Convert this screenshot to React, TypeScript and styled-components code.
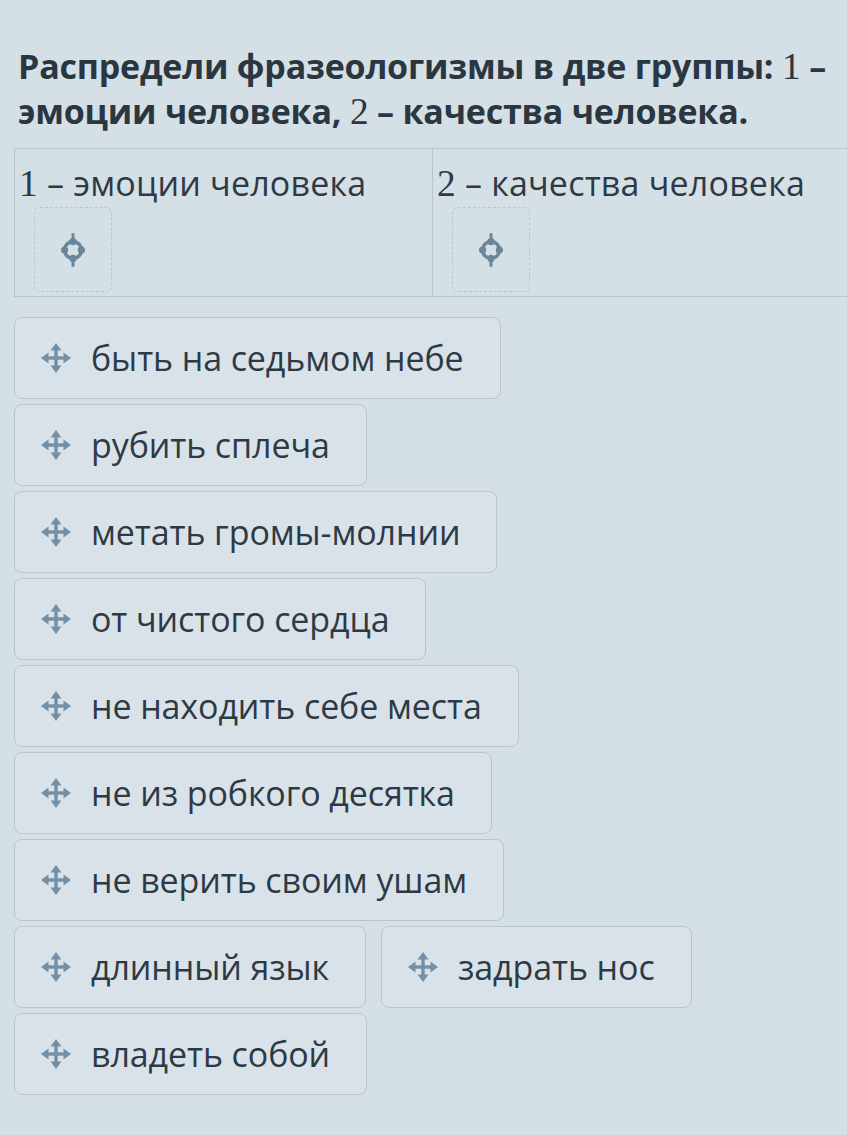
import React from "react";
import styled, { createGlobalStyle } from "styled-components";

const GlobalStyle = createGlobalStyle`
  html, body {
    margin: 0;
    padding: 0;
    background: #d5dfe6;
    overflow-x: hidden;
  }
  body {
    font-family: "Open Sans", "Noto Sans", sans-serif;
    color: #2d3a45;
  }
`;

const Page = styled.div`
  padding: 44px 0 30px 14px;
  min-height: 1135px;
  box-sizing: border-box;
`;

const Title = styled.h1`
  margin: 0 0 14px 4px;
  font-size: 34px;
  font-weight: 700;
  line-height: 45px;
  letter-spacing: -0.2px;
  color: #2a3640;
  white-space: nowrap;
`;

const Digit = styled.span`
  font-family: "Liberation Serif", serif;
  font-weight: 400;
  font-size: 1.1em;
`;

const Table = styled.div`
  display: grid;
  grid-template-columns: 418px 1fr;
  border: 1.5px solid #b8c3cb;
  border-right: none;
`;

const Cell = styled.div<{ $last?: boolean }>`
  padding: 13px 0 4px 4px;
  border-right: ${(p) => (p.$last ? "none" : "1.5px solid #b8c3cb")};
`;

const CellHead = styled.div`
  font-size: 34px;
  line-height: 42px;
  letter-spacing: 0.2px;
  color: #2d3a45;
  white-space: nowrap;
`;

const DropZone = styled.div`
  margin: 2px 0 0 15px;
  width: 78px;
  height: 85px;
  border: 1.5px dashed #bcc6ce;
  border-radius: 6px;
  box-sizing: border-box;
  display: flex;
  align-items: center;
  justify-content: center;
`;

const Chips = styled.div`
  margin-top: 20px;
  max-width: 720px;
  display: flex;
  flex-wrap: wrap;
  gap: 5px 15px;
`;

const Chip = styled.div`
  height: 82px;
  box-sizing: border-box;
  display: flex;
  align-items: center;
  gap: 20px;
  padding: 0 36px 0 26px;
  background: #d9e2e9;
  border: 1.5px solid #b9c5cd;
  border-radius: 8px;
  font-size: 34px;
  letter-spacing: -0.1px;
  color: #2d3a45;
  white-space: nowrap;
`;

const MoveIcon = () => (
  <svg width="30" height="30" viewBox="0 0 30 30" fill="#7390a7">
    <rect x="13.3" y="5" width="3.4" height="20" />
    <rect x="5" y="13.3" width="20" height="3.4" />
    <polygon points="15,0 9.5,7.5 20.5,7.5" />
    <polygon points="15,30 9.5,22.5 20.5,22.5" />
    <polygon points="0,15 7.5,9.5 7.5,20.5" />
    <polygon points="30,15 22.5,9.5 22.5,20.5" />
  </svg>
);

const TargetIcon = () => (
  <svg width="36" height="36" viewBox="0 0 30 30">
    <circle cx="15" cy="15" r="7" fill="none" stroke="#6a869d" strokeWidth="3" />
    <rect x="13.8" y="1" width="2.4" height="6" fill="#6a869d" />
    <rect x="13.8" y="23" width="2.4" height="6" fill="#6a869d" />
    <circle cx="15" cy="8" r="3" fill="#6a869d" />
    <circle cx="15" cy="22" r="3" fill="#6a869d" />
    <circle cx="8" cy="15" r="3" fill="#6a869d" />
    <circle cx="22" cy="15" r="3" fill="#6a869d" />
  </svg>
);

const items = [
  "быть на седьмом небе",
  "рубить сплеча",
  "метать громы-молнии",
  "от чистого сердца",
  "не находить себе места",
  "не из робкого десятка",
  "не верить своим ушам",
  "длинный язык",
  "задрать нос",
  "владеть собой",
];

export default function App() {
  return (
    <>
      <GlobalStyle />
      <Page>
        <Title>
          Распредели фразеологизмы в две группы: <Digit>1</Digit> –
          <br />
          эмоции человека, <Digit>2</Digit> – качества человека.
        </Title>
        <Table>
          <Cell>
            <CellHead>
              <Digit>1</Digit> – эмоции человека
            </CellHead>
            <DropZone>
              <TargetIcon />
            </DropZone>
          </Cell>
          <Cell $last>
            <CellHead>
              <Digit>2</Digit> – качества человека
            </CellHead>
            <DropZone>
              <TargetIcon />
            </DropZone>
          </Cell>
        </Table>
        <Chips>
          {items.map((t) => (
            <Chip key={t}>
              <MoveIcon />
              {t}
            </Chip>
          ))}
        </Chips>
      </Page>
    </>
  );
}
